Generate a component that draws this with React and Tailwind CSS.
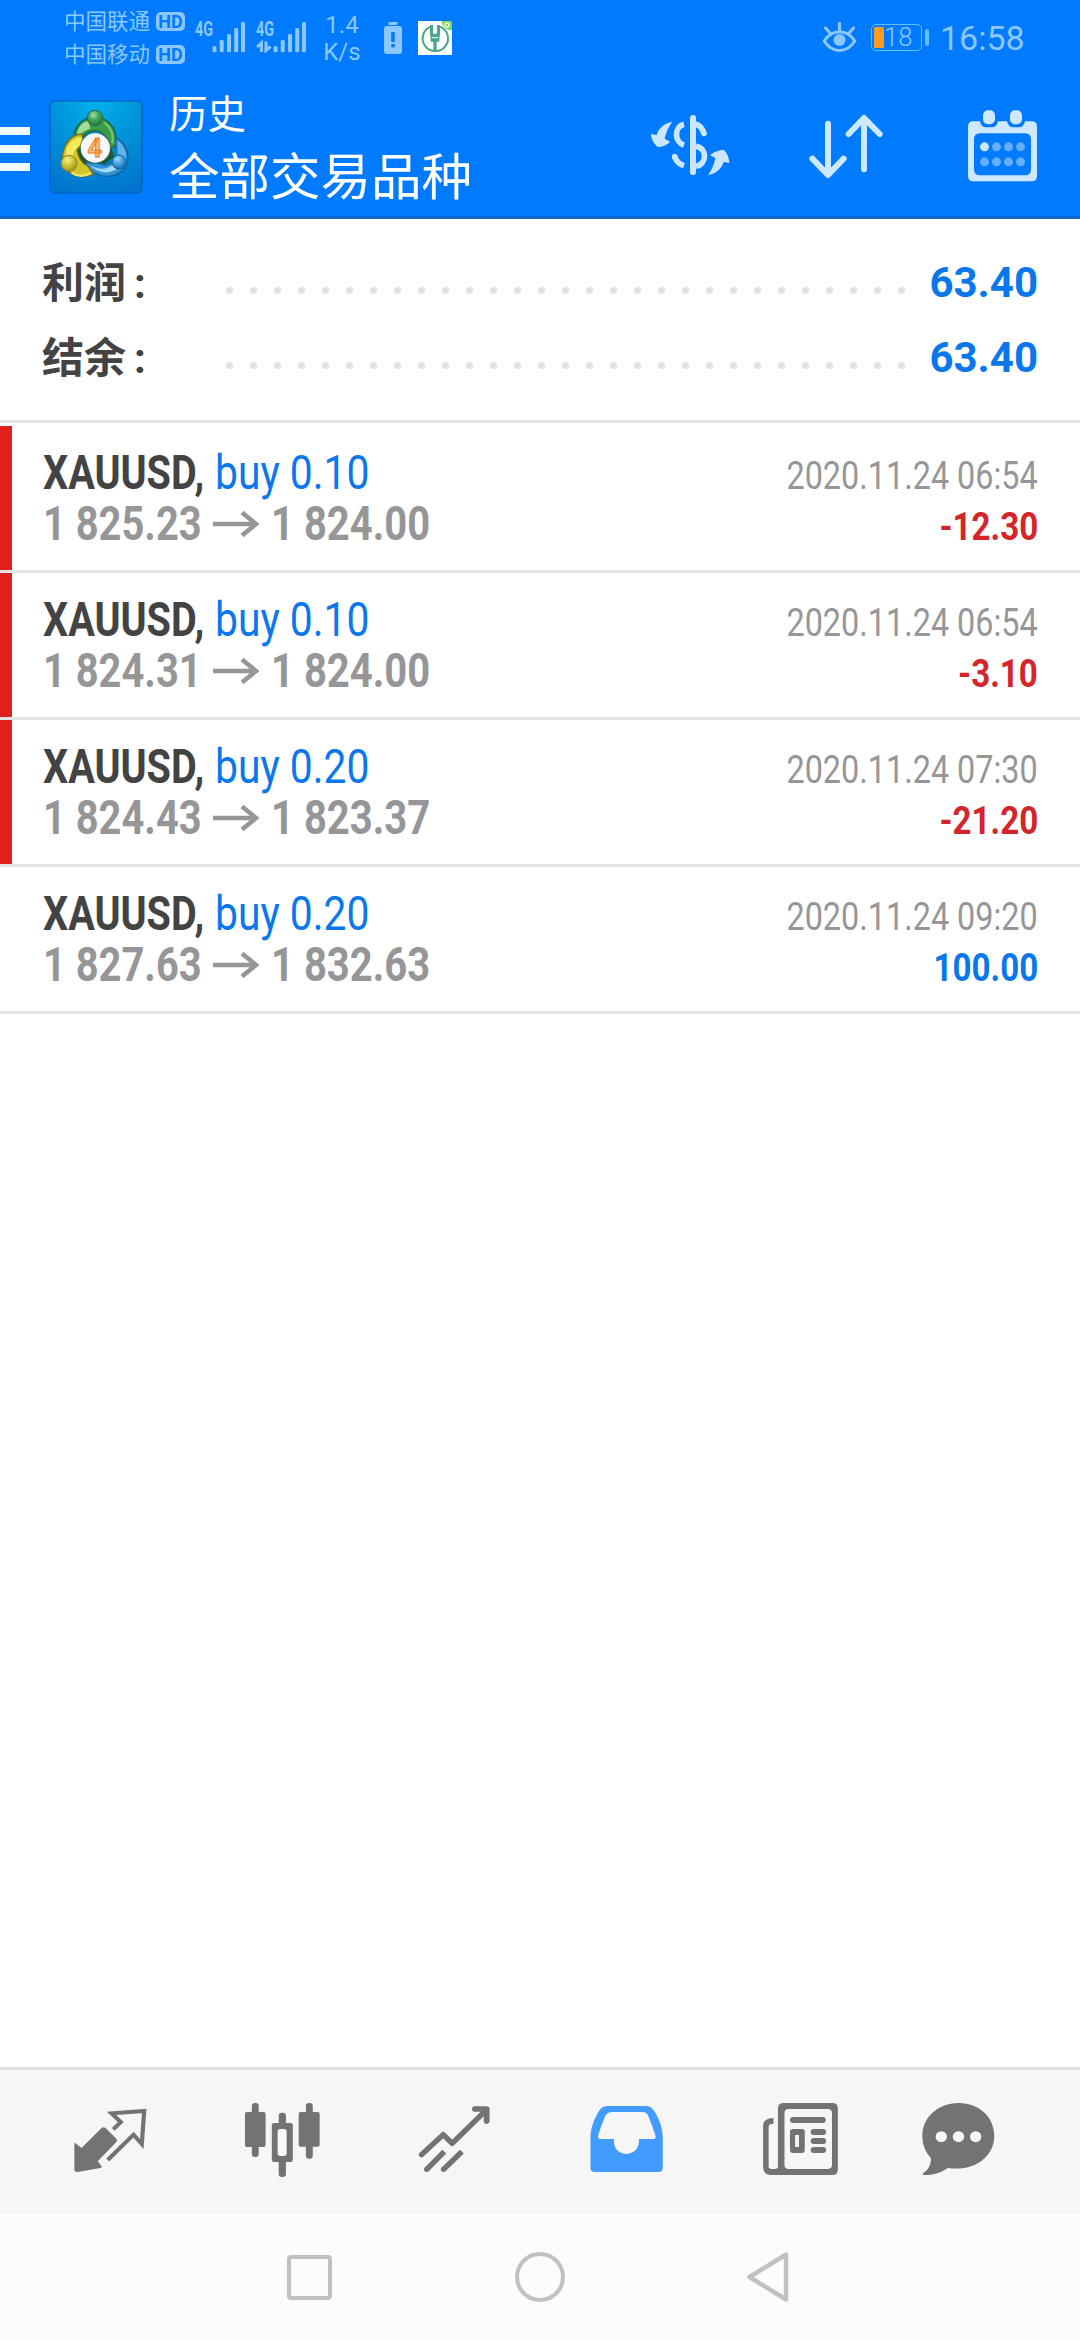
import React from "react";

const FONT = "font-['Roboto','Noto_Sans_CJK_SC',sans-serif]";

const TRADES = [
  { volume: "0.10", open: "1 825.23", close: "1 824.00", time: "2020.11.24 06:54", profit: "-12.30", loss: true },
  { volume: "0.10", open: "1 824.31", close: "1 824.00", time: "2020.11.24 06:54", profit: "-3.10", loss: true },
  { volume: "0.20", open: "1 824.43", close: "1 823.37", time: "2020.11.24 07:30", profit: "-21.20", loss: true },
  { volume: "0.20", open: "1 827.63", close: "1 832.63", time: "2020.11.24 09:20", profit: "100.00", loss: false },
];

function Carrier({ name }) {
  return (
    <div className="flex h-[33px] items-center gap-[6px]">
      <span className="text-[21.5px] leading-[33px] whitespace-nowrap">{name}</span>
      <span className="flex h-[19px] w-[29px] items-center justify-center rounded-[5px] bg-[#8cc6ff] text-[18px] leading-none font-bold text-[#007aff]">
        HD
      </span>
    </div>
  );
}

function Signal({ arrows }) {
  return (
    <div className="relative h-[32px] w-[50px]">
      <span className="absolute top-0 left-0 origin-left scale-x-[.72] text-[20px] leading-[16px] font-bold">4G</span>
      <svg className="absolute inset-0" width="50" height="32" viewBox="0 0 50 32" fill="currentColor">
        <rect x="17.5" y="25" width="4" height="6.3" rx="1.6" />
        <rect x="24.7" y="19" width="4" height="12.3" rx="1.4" />
        <rect x="32" y="13" width="4" height="18.3" rx="1.4" />
        <rect x="39.2" y="7" width="4" height="24.3" rx="1.4" />
        <rect x="46" y="1" width="4" height="30.3" rx="1.4" />
        {arrows && (
          <g fill="none" stroke="currentColor" strokeWidth="3">
            <path d="M5.4 31V22L1 26" />
            <path d="M10 20.500V29.500L14.600 25.500" />
          </g>
        )}
      </svg>
    </div>
  );
}

function StatusBar() {
  return (
    <div className="flex h-[76px] items-start text-[#8cc8ff]">
      <div className="ml-[64px] flex w-[121px] flex-col pt-[5px]">
        <Carrier name="中国联通" />
        <Carrier name="中国移动" />
      </div>
      <div className="mt-[21px] ml-[10px] flex gap-[11px]">
        <Signal />
        <Signal arrows />
      </div>
      <div className="mt-[12px] ml-[17px] w-[38px] text-center text-[24px] leading-[27px]">
        <div>1.4</div>
        <div>K/s</div>
      </div>
      <svg className="mt-[22px] ml-[23px]" width="18" height="32" viewBox="0 0 18 32">
        <rect x="4.500" width="9" height="3" rx="1" fill="#8cc8ff" />
        <rect y="4" width="18" height="28" rx="3" fill="#8cc8ff" />
        <rect x="7.200" y="10" width="3.600" height="10" fill="#007aff" />
        <rect x="7.200" y="22" width="3.600" height="3.600" rx="1" fill="#007aff" />
      </svg>
      <svg className="mt-[21px] ml-[16px]" width="34" height="34" viewBox="0 0 102 102">
        <rect width="102" height="102" fill="#fbfffd" />
        <path d="M71 0H102V28C88 28 72 18 71 0Z" fill="#7dd65c" />
        <circle cx="87" cy="12" r="6" fill="none" stroke="#f1ffe9" strokeWidth="4" />
        <path d="M38 17A38 38 0 1 0 66 17" fill="none" stroke="#4aa58c" strokeWidth="6" />
        <path d="M36 12H45V38H57V12H66V38Q64 48 64 62H56V88H46V62H38Q38 48 36 38Z" fill="#4aa58c" />
        <path d="M42 50H60" stroke="#fbfffd" strokeWidth="3" />
      </svg>
      <svg className="mt-[22px] ml-[370px]" width="35" height="31" viewBox="0 0 35 31">
        <path d="M17.500 1.500V8M3.500 6L8 11M31.500 6L27 11" stroke="#8cc8ff" strokeWidth="3.200" strokeLinecap="round" />
        <path d="M2.200 19C10 6.500 25 6.500 32.800 19C25 31.500 10 31.500 2.200 19Z" fill="none" stroke="#8cc8ff" strokeWidth="3" />
        <circle cx="17.500" cy="18" r="6" fill="#8cc8ff" />
      </svg>
      <div className="mt-[24px] ml-[14px] flex items-center">
        <div className="flex h-[27px] w-[51px] items-center rounded-[5px] border-[1.5px] border-[#66c0f8] pl-[2px]">
          <div className="h-[21px] w-[10px] rounded-[1.500px] bg-[#ff9b1e]" />
          <span className="-mt-px text-[25.500px] leading-[25px] font-[350]">18</span>
        </div>
        <div className="ml-[3px] h-[17px] w-[4px] rounded-[2px] bg-[#66c0f8]" />
      </div>
      <div className="mt-[18px] ml-[11px] text-[34px] leading-[40px]">16:58</div>
    </div>
  );
}

function AppLogo() {
  return (
    <svg width="94" height="94" viewBox="0 0 282 282">
      <defs>
        <radialGradient id="tile" cx="0.500" cy="0" r="1.100">
          <stop offset="0" stopColor="#00b0ea" />
          <stop offset="0.500" stopColor="#008fd8" />
          <stop offset="1" stopColor="#0070cc" />
        </radialGradient>
        <radialGradient id="green" cx="0.400" cy="0.300" r="0.750">
          <stop offset="0" stopColor="#a5e09e" />
          <stop offset="0.450" stopColor="#45a35a" />
          <stop offset="1" stopColor="#1d7a3c" />
        </radialGradient>
        <radialGradient id="yellow" cx="0.400" cy="0.300" r="0.750">
          <stop offset="0" stopColor="#f7ef8a" />
          <stop offset="0.500" stopColor="#cdc033" />
          <stop offset="1" stopColor="#978c1c" />
        </radialGradient>
        <radialGradient id="sky" cx="0.400" cy="0.300" r="0.750">
          <stop offset="0" stopColor="#a4dcfa" />
          <stop offset="0.500" stopColor="#3d9fdd" />
          <stop offset="1" stopColor="#1766ab" />
        </radialGradient>
      </defs>
      <rect x="3" y="3" width="276" height="276" rx="14" fill="url(#tile)" stroke="#0767c6" strokeWidth="5" />
      <path d="M100 120H180L196 170L150 206L100 196L78 160Z" fill="#21592f" />
      <path d="M76 122C72 78 102 52 138 52C176 52 208 86 200 136L178 152C178 116 164 94 138 92C116 94 102 104 96 124Z" fill="#3c9b48" stroke="#1c6236" strokeWidth="4" />
      <path d="M84 114C82 84 100 66 118 64L124 86C104 92 94 100 90 114Z" fill="#a2dd9c" />
      <path d="M166 68C186 82 194 104 190 130" fill="none" stroke="#7cc576" strokeWidth="6" />
      <path d="M200 112C230 128 244 166 232 196C216 228 172 238 138 220C122 212 114 202 110 188L140 184C162 200 186 198 200 172Z" fill="#2f93d8" stroke="#175f9e" strokeWidth="4" />
      <path d="M124 196C146 210 176 210 194 192L204 206C180 224 144 220 124 196Z" fill="#9fdaf8" />
      <path d="M206 122C226 138 234 160 230 176L208 166Z" fill="#62b6ea" />
      <path d="M98 102C60 104 34 144 42 196C56 226 100 238 134 222L116 198C98 190 88 172 84 150L106 128Z" fill="#d2c52c" stroke="#73701b" strokeWidth="4" />
      <path d="M50 170C50 136 72 112 98 112L96 132C80 142 72 158 72 170Z" fill="#f4ea5a" />
      <path d="M68 218C86 230 106 230 124 220" fill="none" stroke="#efe668" strokeWidth="7" />
      <circle cx="138" cy="54" r="23" fill="url(#green)" stroke="#216b3d" strokeWidth="3" />
      <circle cx="60" cy="190" r="24" fill="url(#yellow)" stroke="#8b861c" strokeWidth="3" />
      <circle cx="210" cy="186" r="21" fill="url(#sky)" stroke="#14609c" strokeWidth="3" />
      <circle cx="139" cy="145" r="47" fill="#2b5f58" opacity="0.600" />
      <circle cx="139" cy="144" r="44" fill="#f8f8fa" />
      <text x="137" y="170" textAnchor="middle" fontSize="76" fontWeight="700" fontFamily="Roboto" fill="#ffc07a" stroke="#f07a1c" strokeWidth="3">4</text>
    </svg>
  );
}

function AppBar() {
  return (
    <div className="flex h-[140px] items-start">
      <div className="mt-[51px] flex w-[30px] flex-col gap-[10px]">
        <div className="h-[8px] bg-[#f0ffff]" />
        <div className="h-[8px] bg-[#f0ffff]" />
        <div className="h-[8px] bg-[#f0ffff]" />
      </div>
      <div className="mt-[24px] ml-[19px]">
        <AppLogo />
      </div>
      <div className="mt-[16px] ml-[26px] flex w-[481px] flex-col whitespace-nowrap text-white">
        <div className="text-[38.500px] leading-[46px]">历史</div>
        <div className="mt-[10px] text-[50.500px] leading-[60px]">全部交易品种</div>
      </div>
      <svg className="mt-[37px]" width="80" height="64" viewBox="150 339 240 192" fill="#cde6ff">
        <rect x="270" y="345" width="18" height="180" rx="9" />
        <g fill="none" stroke="#cde6ff" strokeWidth="17">
          <path d="M252 373C222 380 222 426 252 435" />
          <path d="M288 373Q305 378 312 400" strokeLinecap="round" />
          <path d="M288 439C322 444 322 492 288 499" />
          <path d="M224 470Q230 490 252 497" />
        </g>
        <circle cx="224" cy="470" r="8.500" />
        <path d="M217 366C196 369 177 382 170 405L153 402Q154 425 173 441Q193 441 211 426L194 416Q200 388 217 366Z" />
        <path d="M324 525C344 523 364 509 371 486L388 489Q387 466 372 450Q350 450 330 465L346 474Q341 502 324 525Z" />
      </svg>
      <svg className="mt-[37px] ml-[78px]" width="76" height="66" viewBox="624 339 228 198" fill="none" stroke="#cde8ff" strokeWidth="18" strokeLinecap="round" strokeLinejoin="round">
        <path d="M684 371V523M637 476L684 525L731 476" />
        <path d="M792 508V356M746 402L792 354L839 402" />
      </svg>
      <svg className="mt-[34px] ml-[84px]" width="69" height="72" viewBox="1104 329 207 216">
        <path fillRule="evenodd" fill="#cde8ff" d="M1120 363H1140Q1144 381 1158 381H1176Q1190 381 1194 363H1221Q1226 381 1239 381H1257Q1271 381 1275 363H1295Q1311 363 1311 379V527Q1311 543 1295 543H1120Q1104 543 1104 527V379Q1104 363 1120 363ZM1140 399Q1122 399 1122 417V507Q1122 525 1140 525H1275Q1293 525 1293 507V417Q1293 399 1275 399Z" />
        <rect x="1149" y="330" width="36" height="42" rx="15" fill="#cde8ff" />
        <rect x="1230" y="330" width="36" height="42" rx="15" fill="#cde8ff" />
        <g fill="#62b0ff">
          <circle cx="1153.500" cy="439.500" r="13.500" fill="#cde8ff" />
          <circle cx="1189.500" cy="439.500" r="13.500" />
          <circle cx="1225.500" cy="439.500" r="13.500" />
          <circle cx="1261.500" cy="439.500" r="13.500" />
          <circle cx="1153.500" cy="484.500" r="13.500" />
          <circle cx="1189.500" cy="484.500" r="13.500" />
          <circle cx="1225.500" cy="484.500" r="13.500" />
          <circle cx="1261.500" cy="484.500" r="13.500" />
        </g>
      </svg>
    </div>
  );
}

function SummaryRow({ label, value }) {
  return (
    <div className="flex h-[75px] items-center">
      <span className="mt-[2px] flex w-[184px] pl-[42px] text-[42px] leading-[60px] font-bold whitespace-nowrap text-[#434343]">
        {label}
        <span className="ml-[8px]">:</span>
      </span>
      <div className="mt-[16px] ml-[42px] flex w-[679px] shrink-0 justify-between">
        {Array.from({ length: 29 }, (_, i) => (
          <span key={i} className="size-[7px] rounded-full bg-[#e2e2e2]" />
        ))}
      </div>
      <span className="ml-auto pr-[42px] text-[42px] leading-[60px] font-bold text-[#0a78ec]">{value}</span>
    </div>
  );
}

function TradeRow({ trade }) {
  return (
    <div className="flex h-[147px] border-b-[3px] border-[#e3e3e3]">
      <div className={trade.loss ? "w-[12px] bg-[#e01f1f]" : "w-[12px]"} />
      <div className="flex grow justify-between pr-[42px] pl-[31px] whitespace-nowrap">
        <div className="pt-[21px] text-[48px] leading-[51px]">
          <div className="flex h-[51px]">
            <span className="w-[171.500px]">
              <span className="inline-block origin-left scale-x-[.825] font-bold text-[#434343]">XAUUSD,</span>
            </span>
            <span className="inline-block origin-left scale-x-[.85] text-[#0a78ec]">buy {trade.volume}</span>
          </div>
          <div className="flex h-[51px] font-bold text-[#969698]">
            <span className="w-[170px]">
              <span className="inline-block origin-left scale-x-[.83]">{trade.open}</span>
            </span>
            <svg className="mt-[13px] mr-[12px]" width="46" height="26" viewBox="0 0 46 26" fill="none" stroke="#969698" strokeWidth="4.500">
              <path d="M0 13H43M29 1.500L43 13L29 24.500" />
            </svg>
            <span className="inline-block origin-left scale-x-[.833]">{trade.close}</span>
          </div>
        </div>
        <div className="flex flex-col items-end pt-[25px] text-[39px] leading-[51px]">
          <span className="origin-right scale-x-[.83] text-[#969698]">{trade.time}</span>
          <span className={trade.loss ? "origin-right scale-x-[.85] font-bold text-[#d4252a]" : "origin-right scale-x-[.85] font-bold text-[#0a78ec]"}>
            {trade.profit}
          </span>
        </div>
      </div>
    </div>
  );
}

function TabIcon({ viewBox, children }) {
  return (
    <div className="flex items-center justify-center">
      <svg width="82.640" height="80" viewBox={viewBox} preserveAspectRatio="none" fill="#737373">
        {children}
      </svg>
    </div>
  );
}

function TabBar() {
  return (
    <div className="grid h-[147px] grid-cols-[172.500px_172.500px_172.500px_172.500px_172.500px_143px] border-t-[3px] border-[#e1e1e1] bg-[#f6f6f6] pl-[24px]">
      <TabIcon viewBox="199.5 156 240 240">
        <path d="M215 280Q217 277 220 281L236 294L294 234Q300 229 306 234L337 266Q342 271 337 276L283 334L295 350Q296 353 291 354L224 366Q215 366 215 358Z" />
        <path d="M328 238L350 216L323 190L418 183L411 282L387 254L312 330" fill="none" stroke="#737373" strokeWidth="12" />
      </TabIcon>
      <TabIcon viewBox="697.5 156 240 240">
        <rect x="729" y="159" width="20" height="162" rx="9" />
        <rect x="709" y="186" width="60" height="105" rx="6" />
        <rect x="886" y="159" width="20" height="167" rx="9" />
        <rect x="865" y="186" width="61" height="104" rx="6" />
        <rect x="807" y="188" width="21" height="193" rx="9" />
        <rect x="787" y="219" width="61" height="117" rx="7" />
        <rect x="804" y="237" width="26" height="81" rx="8" fill="#f8f8f8" />
      </TabIcon>
      <TabIcon viewBox="1200 156 240 240">
        <g fill="none" stroke="#737373" strokeWidth="16" strokeLinejoin="round">
          <path d="M1222 314L1285 254L1311 280L1408 182" strokeLinecap="round" />
          <path d="M1377 177H1411V213" strokeWidth="17" strokeLinecap="round" />
          <path d="M1237 358L1288 305M1286 358L1339 305" />
        </g>
        <circle cx="1237" cy="358" r="8" />
        <circle cx="1286" cy="358" r="8" />
      </TabIcon>
      <TabIcon viewBox="133 156 240 240">
        <path fill="#429cff" fillRule="evenodd" d="M193 168H309Q320 168 327 177C345 202 356 236 356 262V353Q356 366 343 366H160Q146 366 146 353V262C146 236 157 202 175 177Q182 168 193 168ZM206 186Q195 187 190 196Q176 228 168 258Q167 267 175 267H214Q212 308 250 312Q288 308 287 267H328Q337 267 335 258Q326 228 313 196Q309 187 298 186Z" />
      </TabIcon>
      <TabIcon viewBox="635 156 240 240">
        <path fillRule="evenodd" d="M707 159H848Q864 159 864 175V359Q864 375 848 375H670Q647 375 647 350V225Q648 205 677 204V221Q663 221 663 230V349Q663 357 671 357H681Q690 357 690 349V175Q690 159 707 159ZM721 177Q709 177 709 189V345Q709 357 721 357H834Q847 357 847 345V189Q847 177 834 177Z" />
        <rect x="725" y="201" width="104" height="18" rx="9" />
        <path fillRule="evenodd" d="M734 237H760Q768 237 768 246V300Q768 309 760 309H734Q725 309 725 300V246Q725 237 734 237ZM740 255V291H751V255Z" />
        <rect x="785" y="237" width="45" height="18" rx="9" />
        <rect x="785" y="264" width="45" height="18" rx="9" />
        <rect x="785" y="291" width="45" height="18" rx="9" />
      </TabIcon>
      <TabIcon viewBox="1093.5 156 240 240">
        <path d="M1214 159C1275 159 1318 202 1318 258C1318 318 1262 366 1183 354C1162 370 1140 375 1113 375Q1107 374 1113 368C1128 358 1134 344 1134 324C1118 306 1109 284 1109 258C1109 202 1155 159 1214 159Z" />
        <g fill="#f8f8f8">
          <circle cx="1164" cy="260" r="16.500" />
          <circle cx="1214" cy="260" r="16.500" />
          <circle cx="1264" cy="260" r="16.500" />
        </g>
      </TabIcon>
    </div>
  );
}

function SystemNav() {
  return (
    <div className="grid h-[126px] grid-cols-[230px_230px_230px] items-center justify-center justify-items-center bg-[#fcfcfc]">
      <div className="mr-[2px] size-[45px] rounded-[4px] border-4 border-[#c1c1c1]" />
      <div className="size-[50px] rounded-full border-4 border-[#c1c1c1]" />
      <svg className="mr-[2px]" width="46" height="52" viewBox="0 0 46 52">
        <path d="M40 3.500V48.500L3.500 26Z" fill="none" stroke="#c1c1c1" strokeWidth="4.500" strokeLinejoin="round" />
      </svg>
    </div>
  );
}

export default function App() {
  return (
    <div className={`flex h-[2340px] w-[1080px] flex-col overflow-hidden bg-white ${FONT}`}>
      <header className="h-[219px] border-b-[3px] border-[#1068c8] bg-[#007aff]">
        <StatusBar />
        <AppBar />
      </header>
      <section className="h-[204px] border-b-[3px] border-[#e3e3e3] pt-[26px]">
        <SummaryRow label="利润" value="63.40" />
        <SummaryRow label="结余" value="63.40" />
      </section>
      <main className="grow pt-[3px]">
        {TRADES.map((trade) => (
          <TradeRow key={trade.open} trade={trade} />
        ))}
      </main>
      <TabBar />
      <SystemNav />
    </div>
  );
}
